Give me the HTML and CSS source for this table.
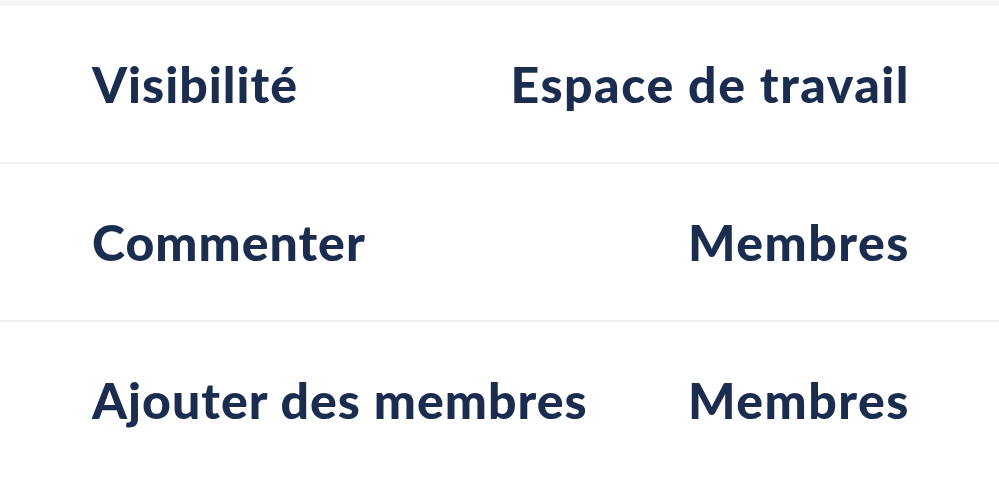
FILE: index.html
```html
<!DOCTYPE html>
<html lang="fr">
<head>
<meta charset="utf-8">
<link rel="stylesheet" href="styles.css">
</head>
<body>
<div class="top"></div>
<div class="list">
  <div class="row"><span class="label">Visibilité</span><span class="value">Espace de travail</span></div>
  <div class="row"><span class="label">Commenter</span><span class="value">Membres</span></div>
  <div class="row"><span class="label">Ajouter des membres</span><span class="value">Membres</span></div>
</div>
</body>
</html>
```
FILE: styles.css
```css
html, body { margin: 0; padding: 0; background: #ffffff; }
body { width: 999px; height: 478px; overflow: hidden; font-family: Lato, "Noto Sans", sans-serif; }
.top { height: 6px; background: #f3f4f5; }
.list { display: flex; flex-direction: column; }
.row {
  height: 156px;
  display: flex;
  align-items: center;
  justify-content: space-between;
  padding: 0 89px 0 92px;
  border-bottom: 2px solid #f0f0f1;
  color: #1b2d4f;
  font-size: 50px;
  font-weight: 900;
  letter-spacing: 1px;
}
.row:last-child { border-bottom: none; }
.value { letter-spacing: 1.5px; }
```
